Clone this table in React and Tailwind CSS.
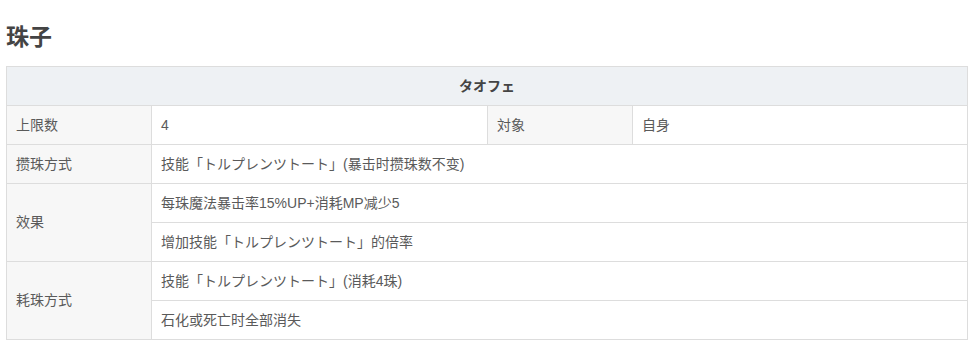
export default function App() {
  const font = { fontFamily: '"Liberation Sans", "Noto Sans CJK SC", sans-serif' };
  const th = "border border-[#dddddd] bg-[#f7f7f7] px-[9px] text-left font-normal align-middle";
  const td = "border border-[#dddddd] bg-white px-[9px] align-middle";

  return (
    <div className="min-h-[361px] bg-white px-[6px] pt-[20px] text-[#5a5a5a]" style={font}>
      <h2 className="mb-[12px] text-[23px] font-bold leading-[34px] text-[#444444]">珠子</h2>
      <table className="w-[961px] table-fixed border-collapse text-[14px]">
        <colgroup>
          <col className="w-[145px]" />
          <col className="w-[336px]" />
          <col className="w-[145px]" />
          <col className="w-[335px]" />
        </colgroup>
        <tbody>
          <tr className="h-[39px]">
            <th colSpan={4} className="border border-[#dddddd] bg-[#eef1f4] text-center font-bold text-[#444444]">
              タオフェ
            </th>
          </tr>
          <tr className="h-[39px]">
            <th className={th}>上限数</th>
            <td className={td}>4</td>
            <th className={th}>対象</th>
            <td className={td}>自身</td>
          </tr>
          <tr className="h-[39px]">
            <th className={th}>攒珠方式</th>
            <td colSpan={3} className={td}>技能「トルプレンツトート」(暴击时攒珠数不变)</td>
          </tr>
          <tr className="h-[39px]">
            <th rowSpan={2} className={th}>效果</th>
            <td colSpan={3} className={td}>每珠魔法暴击率15%UP+消耗MP减少5</td>
          </tr>
          <tr className="h-[39px]">
            <td colSpan={3} className={td}>增加技能「トルプレンツトート」的倍率</td>
          </tr>
          <tr className="h-[39px]">
            <th rowSpan={2} className={th}>耗珠方式</th>
            <td colSpan={3} className={td}>技能「トルプレンツトート」(消耗4珠)</td>
          </tr>
          <tr className="h-[39px]">
            <td colSpan={3} className={td}>石化或死亡时全部消失</td>
          </tr>
        </tbody>
      </table>
    </div>
  );
}
